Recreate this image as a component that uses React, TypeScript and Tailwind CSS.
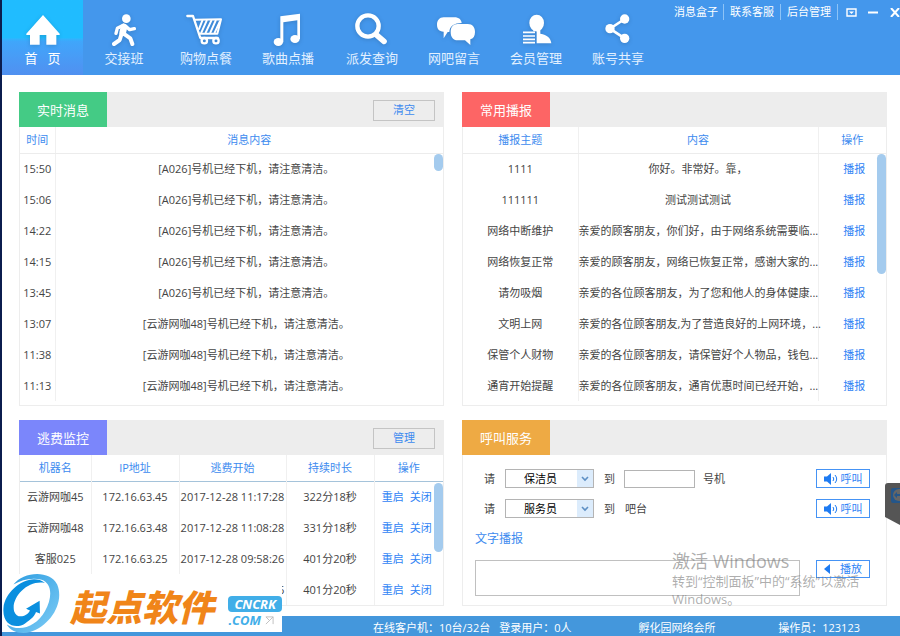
import type { ReactNode } from 'react';
import { useState } from 'react';

const navItems = [
  { label: '交接班', icon: 'run' },
  { label: '购物点餐', icon: 'cart' },
  { label: '歌曲点播', icon: 'music' },
];

const moreNavItems = [
  { label: '派发查询', icon: 'search' },
  { label: '网吧留言', icon: 'chat' },
  { label: '会员管理', icon: 'member' },
  { label: '账号共享', icon: 'share' },
];

const messages = [
  { time: '15:50', text: '[A026]号机已经下机，请注意清洁。' },
  { time: '15:06', text: '[A026]号机已经下机，请注意清洁。' },
  { time: '14:22', text: '[A026]号机已经下机，请注意清洁。' },
  { time: '14:15', text: '[A026]号机已经下机，请注意清洁。' },
  { time: '13:45', text: '[A026]号机已经下机，请注意清洁。' },
  { time: '13:07', text: '[云游网咖48]号机已经下机，请注意清洁。' },
  { time: '11:38', text: '[云游网咖48]号机已经下机，请注意清洁。' },
  { time: '11:13', text: '[云游网咖48]号机已经下机，请注意清洁。' },
];

const broadcasts = [
  { topic: '1111', text: '你好。非常好。靠，' },
  { topic: '111111', text: '测试测试测试' },
  { topic: '网络中断维护', text: '亲爱的顾客朋友，你们好，由于网络系统需要临...' },
  { topic: '网络恢复正常', text: '亲爱的顾客朋友，网络已恢复正常，感谢大家的...' },
  { topic: '请勿吸烟', text: '亲爱的各位顾客朋友，为了您和他人的身体健康...' },
  { topic: '文明上网', text: '亲爱的各位顾客朋友,为了营造良好的上网环境，...' },
  { topic: '保管个人财物', text: '亲爱的各位顾客朋友，请保管好个人物品，钱包...' },
  { topic: '通宵开始提醒', text: '亲爱的各位顾客朋友，通宵优惠时间已经开始，...' },
];

const escapes = [
  { name: '云游网咖45', ip: '172.16.63.45', start: '2017-12-28 11:17:28', duration: '322分18秒' },
  { name: '云游网咖48', ip: '172.16.63.48', start: '2017-12-28 11:08:28', duration: '331分18秒' },
  { name: '客服025', ip: '172.16.63.25', start: '2017-12-28 09:58:26', duration: '401分20秒' },
  { name: '', ip: '', start: '2017-12-28 09:58:26', duration: '401分20秒' },
];

const iconShapes: Record<string, ReactNode> = {
  home: <path fill="white" d="M51 3 1 59v4h11v29h29V63h20v29h30V63h10v-4z" />,
  run: (
    <g fill="none" stroke="white" strokeLinecap="round" strokeLinejoin="round">
      <circle cx="58" cy="14" r="13" fill="white" stroke="none" />
      <path strokeWidth="20" d="M51 39 47 56" />
      <path strokeWidth="10" d="M49 34 31 43 27 58M58 38l10 9 14-3" />
      <path strokeWidth="12" d="M50 59l20 14 6 17M43 62l-5 16-17 12" />
    </g>
  ),
  cart: (
    <g fill="none" stroke="white" strokeLinecap="round" strokeLinejoin="round" transform="translate(-5 0)">
      <path strokeWidth="7" d="M0 6h17l22 66h52" />
      <path strokeWidth="6" d="M22 17l79-1-11 43H35" />
      <path strokeWidth="6" d="M45 20 35 45M58 20 42 56M72 20 55 56M85 20 69 56M97 24 82 56" />
      <circle cx="51" cy="80" r="8" strokeWidth="7" />
      <circle cx="86" cy="80" r="8" strokeWidth="7" />
    </g>
  ),
  music: (
    <g fill="white">
      <ellipse cx="22" cy="84" rx="14" ry="12" />
      <ellipse cx="72" cy="75" rx="14" ry="12" />
      <path d="M28 7 87-1v76h-8V19l-42 6v60h-9z" />
    </g>
  ),
  search: (
    <g fill="none" stroke="white" strokeLinecap="round">
      <circle cx="39" cy="36" r="32" strokeWidth="13" />
      <path strokeWidth="17" d="m66 64 21 18" />
    </g>
  ),
  chat: (
    <g fill="white">
      <path d="M20 10h32c14 0 21 7 22 17-22 0-36 9-37 27h-5L20 73V53C6 52 0 44 0 32s7-22 20-22z" />
      <path d="M62 30h30c15 0 22 10 22 24 0 12-5 20-14 22v17L84 79H62c-14 0-21-10-21-25s7-24 21-24z" />
    </g>
  ),
  member: (
    <g fill="white">
      <ellipse cx="53" cy="27" rx="22" ry="25" />
      <path d="M43 44h21v15c21 4 31 13 33 29H53V52H43z" />
      <path stroke="white" strokeWidth="5" d="M12 55h36M12 66h36M12 76h36M12 86h36" />
    </g>
  ),
  share: (
    <g fill="white">
      <path fill="none" stroke="white" strokeWidth="8" d="M71 15 27 44l44 29" />
      <circle cx="71" cy="15" r="14" />
      <circle cx="27" cy="44" r="14" />
      <circle cx="71" cy="73" r="14" />
    </g>
  ),
};

function NavButton({ label, icon, active = false }: { label: string; icon: string; active?: boolean }) {
  return (
    <button
      className={
        active
          ? 'flex h-[75px] w-[81px] flex-col items-center bg-linear-to-b from-[#20bcff] from-50% via-[#3fa6fb] via-55% to-[#5090f0] pt-[14px] text-white'
          : 'flex h-[75px] w-[82px] flex-col items-center pt-[14px] text-[#e2f0ff]'
      }
    >
      <svg viewBox="0 0 102 96" className="h-8 w-[34px] overflow-visible drop-shadow-sm">
        {iconShapes[icon]}
      </svg>
      <span className="mt-1 text-[13px] leading-4 whitespace-pre">{label}</span>
    </button>
  );
}

interface PanelProps {
  title: string;
  color: string;
  action?: string;
  children: ReactNode;
}

function Panel({ title, color, action, children }: PanelProps) {
  return (
    <section className="flex flex-col border border-t-0 border-[#ededed]">
      <div className="-mx-px flex h-[35px] items-center justify-between bg-[#ededed] pr-[9px]">
        <h2 className={`flex h-[35px] w-[88px] items-center justify-center text-[13px] text-white ${color}`}>
          {title}
        </h2>
        {action && (
          <button className="mt-px h-[21px] w-[62px] border border-[#c4c4c4] text-[11px] leading-4 text-[#3d8bef]">
            {action}
          </button>
        )}
      </div>
      {children}
    </section>
  );
}

const th = 'border-b border-[#ececec] font-normal text-[#3d8bef]';
const divider = 'border-r border-r-[#f0f0f0]';

function CallRow({ id, options, children }: { id: string; options: string[]; children: ReactNode }) {
  return (
    <div className="flex h-[19px] items-center">
      <label htmlFor={id}>请</label>
      <div className="relative ml-[10px] h-[19px] w-[89px]">
        <select
          id={id}
          className="h-[19px] w-full appearance-none rounded-none border border-[#b4b4b4] bg-white pl-[18px] text-[11px] leading-4 text-black"
        >
          {options.map((option) => (
            <option key={option}>{option}</option>
          ))}
        </select>
        <span className="pointer-events-none absolute inset-y-px right-px flex w-4 items-center justify-center bg-[#dcecfc]">
          <svg viewBox="0 0 8 6" className="h-[6px] w-2">
            <path d="M1 1l3 3 3-3" fill="none" stroke="#5d8fc4" strokeWidth="1.6" />
          </svg>
        </span>
      </div>
      {children}
      <button
        type="button"
        className="ml-auto flex h-[19px] w-[54px] items-center justify-center gap-[3px] border border-[#4593f5] text-[#2f83f5]"
      >
        <svg viewBox="0 0 14 12" className="h-3 w-[14px]">
          <path d="M0 3.500h3L7 0v12L3 8.500H0z" fill="#1e7bf2" />
          <path d="M9 4q1.600 2 0 4M11 2q3.400 4 0 8" fill="none" stroke="#1e7bf2" />
        </svg>
        呼叫
      </button>
    </div>
  );
}

function BrandMark() {
  return (
    <div className="absolute bottom-1 left-0 flex h-[58px] w-[280px] items-end bg-white">
      <svg viewBox="6 130 180 184" className="h-[61px] w-[60px] shrink-0 self-center">
        <defs>
          <linearGradient id="ring" x1="0" y1="0" x2="1" y2="1">
            <stop offset="0" stopColor="#2a9be0" />
            <stop offset="1" stopColor="#7fcdf6" />
          </linearGradient>
        </defs>
        <path
          fill="url(#ring)"
          d="M40 165C70 125 150 120 172 165c23 55-22 125-82 143-30 8-60-3-70-23 40 25 90 5 115-40 25-45 20-85-10-95-30-7-60 0-85 15z"
        />
        <path
          fill="#0a8fdf"
          d="M135 160C90 125 15 180 10 235c-5 55 40 65 65 47 20-12 30-24 33-34l12 4-1-38-41 24 12 5c-10 19-40 27-48 2-10-40 40-95 93-85z"
        />
      </svg>
      <span className="ml-2 pb-1 text-4xl leading-10 font-black whitespace-nowrap text-[#f08519] italic">
        起点软件
      </span>
      <div className="ml-auto flex flex-col pb-1 text-[13px] leading-4 font-bold italic">
        <span className="rounded-sm bg-[#41aee8] px-[6px] text-white">CNCRK</span>
        <span className="flex items-center gap-1 text-[#41aee8]">
          .COM
          <svg viewBox="0 0 10 10" className="h-[9px] w-[9px]">
            <path d="M1 1h8v8M9 1 1 9M1 1l4 4" fill="none" stroke="#bbb" />
          </svg>
        </span>
      </div>
    </div>
  );
}

export default function App() {
  const [station, setStation] = useState('');
  const [speech, setSpeech] = useState('');

  return (
    <div
      lang="zh-CN"
      className="relative flex min-h-screen flex-col overflow-hidden border-l-2 border-[#0b1c4d] bg-white font-['Open_Sans','Noto_Sans_CJK_SC',sans-serif] text-[11px] leading-4 text-[#444]"
    >
      <header className="flex h-[75px] items-start justify-between bg-[#4497ec]">
        <nav className="flex">
          <NavButton label="首   页" icon="home" active />
          {navItems.map((item) => (
            <NavButton key={item.label} {...item} />
          ))}
          <div className="ml-[2px] flex">
            {moreNavItems.map((item) => (
              <NavButton key={item.label} {...item} />
            ))}
          </div>
        </nav>
        <div className="flex shrink-0 items-center pt-1 text-white">
          <a href="#messages" className="border-r border-[#8dc3f7] pr-[5px]">消息盒子</a>
          <a href="#service" className="border-r border-[#8dc3f7] px-[6px]">联系客服</a>
          <a href="#admin" className="border-r border-[#8dc3f7] px-[6px]">后台管理</a>
          <button aria-label="菜单" className="ml-2">
            <svg viewBox="0 0 11 9" className="h-[9px] w-[11px]">
              <path d="M1 1h9v7H1z" fill="none" stroke="white" strokeWidth="1.4" />
              <path d="M3 3.500h5L5.500 6z" fill="white" />
            </svg>
          </button>
          <button aria-label="最小化" className="ml-[11px]">
            <svg viewBox="0 0 10 9" className="h-[9px] w-[10px]">
              <path d="M0 4.500h10" stroke="white" strokeWidth="2" />
            </svg>
          </button>
          <button aria-label="关闭" className="ml-3">
            <svg viewBox="0 0 10 9" className="h-[9px] w-[10px]">
              <path d="M1 0l8 9M9 0 1 9" stroke="white" strokeWidth="2" />
            </svg>
          </button>
        </div>
      </header>

      <main className="grid flex-1 grid-cols-2 content-start gap-x-[18px] gap-y-[14px] pt-[17px] pr-[13px] pb-[10px] pl-[17px]">
        <Panel title="实时消息" color="bg-[#44cb85]" action="清空">
          <div className="relative pb-1">
            <table className="w-full table-fixed border-collapse text-center">
              <thead>
                <tr className="h-[26px]">
                  <th className={`w-[35px] ${th} ${divider}`}>时间</th>
                  <th className={th}>消息内容</th>
                </tr>
              </thead>
              <tbody>
                {messages.map((item) => (
                  <tr key={item.time} className="h-[31px]">
                    <td className={divider}>{item.time}</td>
                    <td className="pr-[6px]">{item.text}</td>
                  </tr>
                ))}
              </tbody>
            </table>
            <span className="absolute top-[27px] right-0 h-[17px] w-[9px] rounded-full bg-[#a4cbee]" />
          </div>
        </Panel>

        <Panel title="常用播报" color="bg-[#fd6565]">
          <div className="relative pb-1">
            <table className="w-full table-fixed border-collapse text-center">
              <thead>
                <tr className="h-[26px]">
                  <th className={`w-[115px] ${th} ${divider}`}>播报主题</th>
                  <th className={`w-[240px] ${th} ${divider}`}>内容</th>
                  <th className={th}>操作</th>
                </tr>
              </thead>
              <tbody>
                {broadcasts.map((item) => (
                  <tr key={item.topic} className="h-[31px]">
                    <td className={divider}>{item.topic}</td>
                    <td className={`whitespace-nowrap ${divider}`}>{item.text}</td>
                    <td className="pl-1">
                      <button className="text-[#2f83f5]">播报</button>
                    </td>
                  </tr>
                ))}
              </tbody>
            </table>
            <span className="absolute top-[27px] right-0 h-[120px] w-[9px] rounded-full bg-[#a4cbee]" />
          </div>
        </Panel>

        <Panel title="逃费监控" color="bg-[#7b86fb]" action="管理">
          <div className="relative">
            <table className="w-full table-fixed border-collapse text-center">
              <thead>
                <tr className="h-[26px] border-b border-[#a5c3da]">
                  <th className={`w-[71px] font-normal text-[#3d8bef] ${divider}`}>机器名</th>
                  <th className={`w-[88px] font-normal text-[#3d8bef] ${divider}`}>IP地址</th>
                  <th className={`w-[107px] font-normal text-[#3d8bef] ${divider}`}>逃费开始</th>
                  <th className={`w-[88px] font-normal text-[#3d8bef] ${divider}`}>持续时长</th>
                  <th className="font-normal text-[#3d8bef]">操作</th>
                </tr>
              </thead>
              <tbody>
                {escapes.map((item, index) => (
                  <tr key={index} className="h-[31px]">
                    <td className={divider}>{item.name}</td>
                    <td className={divider}>{item.ip}</td>
                    <td className={`whitespace-nowrap ${divider}`}>{item.start}</td>
                    <td className={divider}>{item.duration}</td>
                    <td className="pr-1 whitespace-nowrap text-[#2f83f5]">
                      <button>重启</button>
                      <button className="ml-[6px]">关闭</button>
                    </td>
                  </tr>
                ))}
              </tbody>
            </table>
            <span className="absolute top-7 right-0 h-[69px] w-[9px] rounded-full bg-[#a4cbee]" />
          </div>
        </Panel>

        <Panel title="呼叫服务" color="bg-[#eeaa44]">
          <form className="flex flex-col pt-[14px] pr-4 pl-[21px]">
            <CallRow id="cleaner" options={['保洁员', '服务员']}>
              <label htmlFor="station" className="ml-[10px]">到</label>
              <input
                id="station"
                value={station}
                onChange={(e) => setStation(e.target.value)}
                className="mr-2 ml-[9px] h-[18px] w-[71px] border border-[#b4b4b4] bg-white"
              />
              <span>号机</span>
            </CallRow>
            <div className="h-[11px]" />
            <CallRow id="waiter" options={['服务员', '保洁员']}>
              <span className="ml-[10px]">到</span>
              <span className="ml-[10px]">吧台</span>
            </CallRow>
            <label htmlFor="speech" className="mt-[13px] -ml-[9px] text-xs text-[#3d8bef]">
              文字播报
            </label>
            <div className="mt-[13px] -ml-[9px] flex items-start justify-between">
              <textarea
                id="speech"
                value={speech}
                onChange={(e) => setSpeech(e.target.value)}
                className="h-9 w-[325px] resize-none border border-[#c0c0c0] bg-white"
              />
              <button
                type="button"
                className="flex h-[18px] w-[54px] items-center justify-center gap-[10px] border border-[#4593f5] text-[#2f83f5]"
              >
                <svg viewBox="0 0 6 10" className="h-[10px] w-[6px]">
                  <path d="M6 0v10L0 5z" fill="#1e7bf2" />
                </svg>
                播放
              </button>
            </div>
          </form>
        </Panel>
      </main>

      <footer className="flex h-5 items-center bg-[#4497dc] pt-1 pr-10 pl-[371px] text-white">
        <span>在线客户机：10台/32台</span>
        <span className="ml-[9px]">登录用户：0人</span>
        <span className="ml-[67px]">孵化园网络会所</span>
        <span className="ml-auto">操作员：123123</span>
      </footer>

      <BrandMark />

      <div className="pointer-events-none absolute right-[26px] bottom-7 w-[202px] text-[13px] leading-[18px] text-[#777]/60">
        <p className="text-lg leading-[22px]">激活 Windows</p>
        <p className="whitespace-nowrap">转到“控制面板”中的“系统”以激活</p>
        <p>Windows。</p>
      </div>

      <svg viewBox="0 0 15 42" className="absolute right-0 bottom-[111px] h-[42px] w-[15px]">
        <path d="M3 0h12v42L0 34V3q0-3 3-3z" fill="#555" />
        <path d="M8 5h7v15H8q-2 0-2-2V7q0-2 2-2z" fill="#24568a" />
        <circle cx="14" cy="12" r="6" fill="#666" />
        <path d="M9 12l3-3v2h3v2h-3v2z" fill="#24568a" />
      </svg>
    </div>
  );
}
